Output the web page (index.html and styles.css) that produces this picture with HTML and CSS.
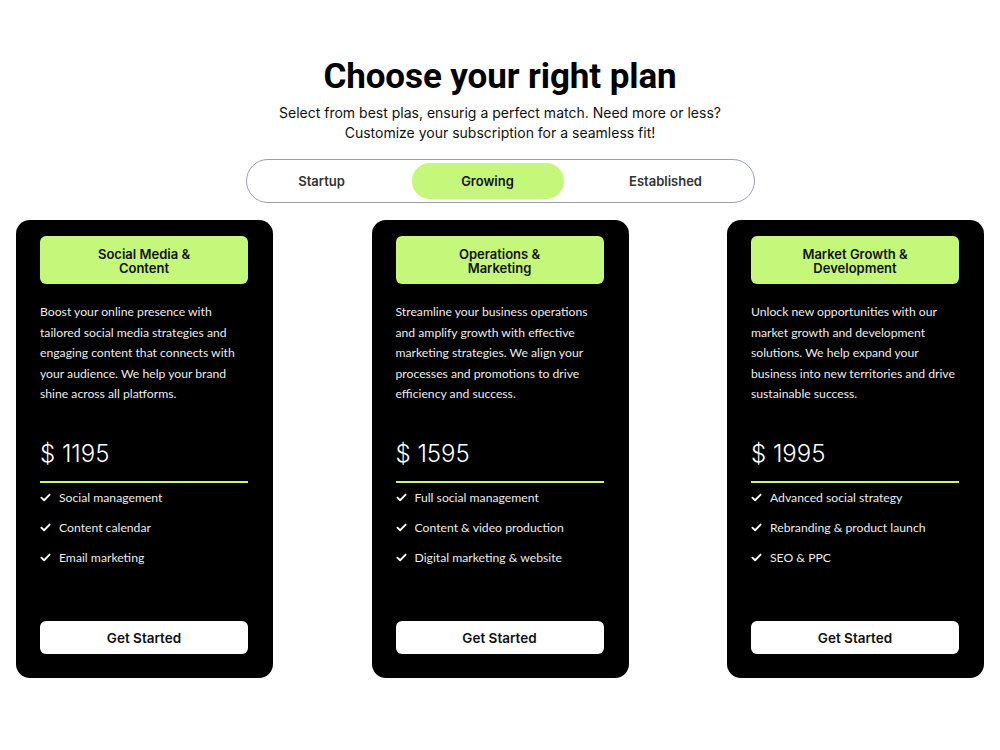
FILE: index.html
```html
<!DOCTYPE html>
<html lang="en">
<head>
<meta charset="utf-8">
<title>Pricing</title>
<link rel="stylesheet" href="styles.css">
</head>
<body>
<main class="pricing">
  <header class="intro">
    <h1 class="title">Choose your right plan</h1>
    <p class="lead">Select from best plas, ensurig a perfect match. Need more or less?<br>Customize your subscription for a seamless fit!</p>
  </header>

  <nav class="tabs">
    <button class="tab tab-first">Startup</button>
    <button class="tab tab-active">Growing</button>
    <button class="tab tab-last">Established</button>
  </nav>

  <section class="cards">
    <article class="card">
      <h2 class="card-title">Social Media &amp;<br>Content</h2>
      <p class="card-desc">Boost your online presence with tailored social media strategies and engaging content that connects with your audience. We help your brand shine across all platforms.</p>
      <div class="price">$ 1195</div>
      <ul class="features">
        <li><svg class="check" viewBox="0 0 12 12"><path d="M1.5 6.2l3 2.8 6-6.2"/></svg>Social management</li>
        <li><svg class="check" viewBox="0 0 12 12"><path d="M1.5 6.2l3 2.8 6-6.2"/></svg>Content calendar</li>
        <li><svg class="check" viewBox="0 0 12 12"><path d="M1.5 6.2l3 2.8 6-6.2"/></svg>Email marketing</li>
      </ul>
      <button class="cta">Get Started</button>
    </article>

    <article class="card">
      <h2 class="card-title">Operations &amp;<br>Marketing</h2>
      <p class="card-desc">Streamline your business operations and amplify growth with effective marketing strategies. We align your processes and promotions to drive efficiency and success.</p>
      <div class="price">$ 1595</div>
      <ul class="features">
        <li><svg class="check" viewBox="0 0 12 12"><path d="M1.5 6.2l3 2.8 6-6.2"/></svg>Full social management</li>
        <li><svg class="check" viewBox="0 0 12 12"><path d="M1.5 6.2l3 2.8 6-6.2"/></svg>Content &amp; video production</li>
        <li><svg class="check" viewBox="0 0 12 12"><path d="M1.5 6.2l3 2.8 6-6.2"/></svg>Digital marketing &amp; website</li>
      </ul>
      <button class="cta">Get Started</button>
    </article>

    <article class="card">
      <h2 class="card-title">Market Growth &amp;<br>Development</h2>
      <p class="card-desc">Unlock new opportunities with our market growth and development solutions. We help expand your business into new territories and drive sustainable success.</p>
      <div class="price">$ 1995</div>
      <ul class="features">
        <li><svg class="check" viewBox="0 0 12 12"><path d="M1.5 6.2l3 2.8 6-6.2"/></svg>Advanced social strategy</li>
        <li><svg class="check" viewBox="0 0 12 12"><path d="M1.5 6.2l3 2.8 6-6.2"/></svg>Rebranding &amp; product launch</li>
        <li><svg class="check" viewBox="0 0 12 12"><path d="M1.5 6.2l3 2.8 6-6.2"/></svg>SEO &amp; PPC</li>
      </ul>
      <button class="cta">Get Started</button>
    </article>
  </section>
</main>
</body>
</html>
```

FILE: styles.css
```css
* {
  box-sizing: border-box;
}

html, body {
  margin: 0;
  padding: 0;
  background: #ffffff;
}

body {
  font-family: "Inter", "Liberation Sans", sans-serif;
  color: #111;
}

.pricing {
  width: 1000px;
  padding: 56px 16px 0;
  display: flex;
  flex-direction: column;
  align-items: center;
}

.intro {
  text-align: center;
}

.title {
  margin: 0;
  font-family: "Roboto", "Liberation Sans", sans-serif;
  font-weight: 700;
  font-size: 35px;
  line-height: 42px;
  letter-spacing: -0.1px;
  color: #000;
}

.lead {
  margin: 5px 0 0;
  font-size: 14px;
  line-height: 20px;
  color: #111;
}

.tabs {
  margin-top: 16px;
  width: 509px;
  height: 44px;
  border: 1.5px solid #9aa0b4;
  border-radius: 22px;
  display: flex;
  align-items: center;
  padding: 0 4px;
}

.tab {
  height: 36px;
  border: 0;
  background: transparent;
  border-radius: 18px;
  font-family: "Inter", "Liberation Sans", sans-serif;
  font-weight: 600;
  font-size: 13px;
  color: #333;
  cursor: pointer;
}

.tab-first {
  flex: 0 0 142px;
}

.tab-active {
  flex: 0 0 152px;
  margin-left: 19px;
  background: #c4f77a;
  color: #111;
}

.tab-last {
  flex: 1;
  margin-left: 18px;
}

.cards {
  margin-top: 17px;
  width: 100%;
  display: flex;
  justify-content: space-between;
}

.card {
  width: 257px;
  height: 458px;
  background: #000;
  border-radius: 14px;
  padding: 16px 25px 24px 24px;
  display: flex;
  flex-direction: column;
  color: #f2f2f2;
}

.card-title {
  margin: 0;
  height: 48px;
  background: #c4f77a;
  border-radius: 6px;
  display: flex;
  align-items: center;
  justify-content: center;
  text-align: center;
  font-family: "Inter", "Liberation Sans", sans-serif;
  font-weight: 600;
  font-size: 13px;
  line-height: 14px;
  padding-top: 1px;
  color: #111;
}

.card-desc {
  margin: 18px 0 0;
  font-family: "Lato", "Open Sans", sans-serif;
  font-size: 12.2px;
  line-height: 20.6px;
  color: #ececec;
}

.price {
  margin-top: 34px;
  font-family: "Inter", "Liberation Sans", sans-serif;
  font-weight: 300;
  font-size: 24px;
  line-height: 30px;
  color: #fff;
  padding-bottom: 12px;
  border-bottom: 2px solid #c4f77a;
}

.features {
  list-style: none;
  margin: 0;
  padding: 0;
}

.features li {
  display: flex;
  align-items: center;
  height: 30px;
  font-family: "Lato", "Open Sans", sans-serif;
  font-size: 12.2px;
  color: #ececec;
}

.check {
  width: 11px;
  height: 11px;
  margin-right: 8px;
  fill: none;
  stroke: #fff;
  stroke-width: 2;
  stroke-linecap: round;
  stroke-linejoin: round;
}

.cta {
  margin-top: auto;
  height: 33px;
  border: 0;
  border-radius: 6px;
  background: #fff;
  font-family: "Inter", "Liberation Sans", sans-serif;
  font-weight: 600;
  font-size: 13.5px;
  color: #111;
  cursor: pointer;
}
```
